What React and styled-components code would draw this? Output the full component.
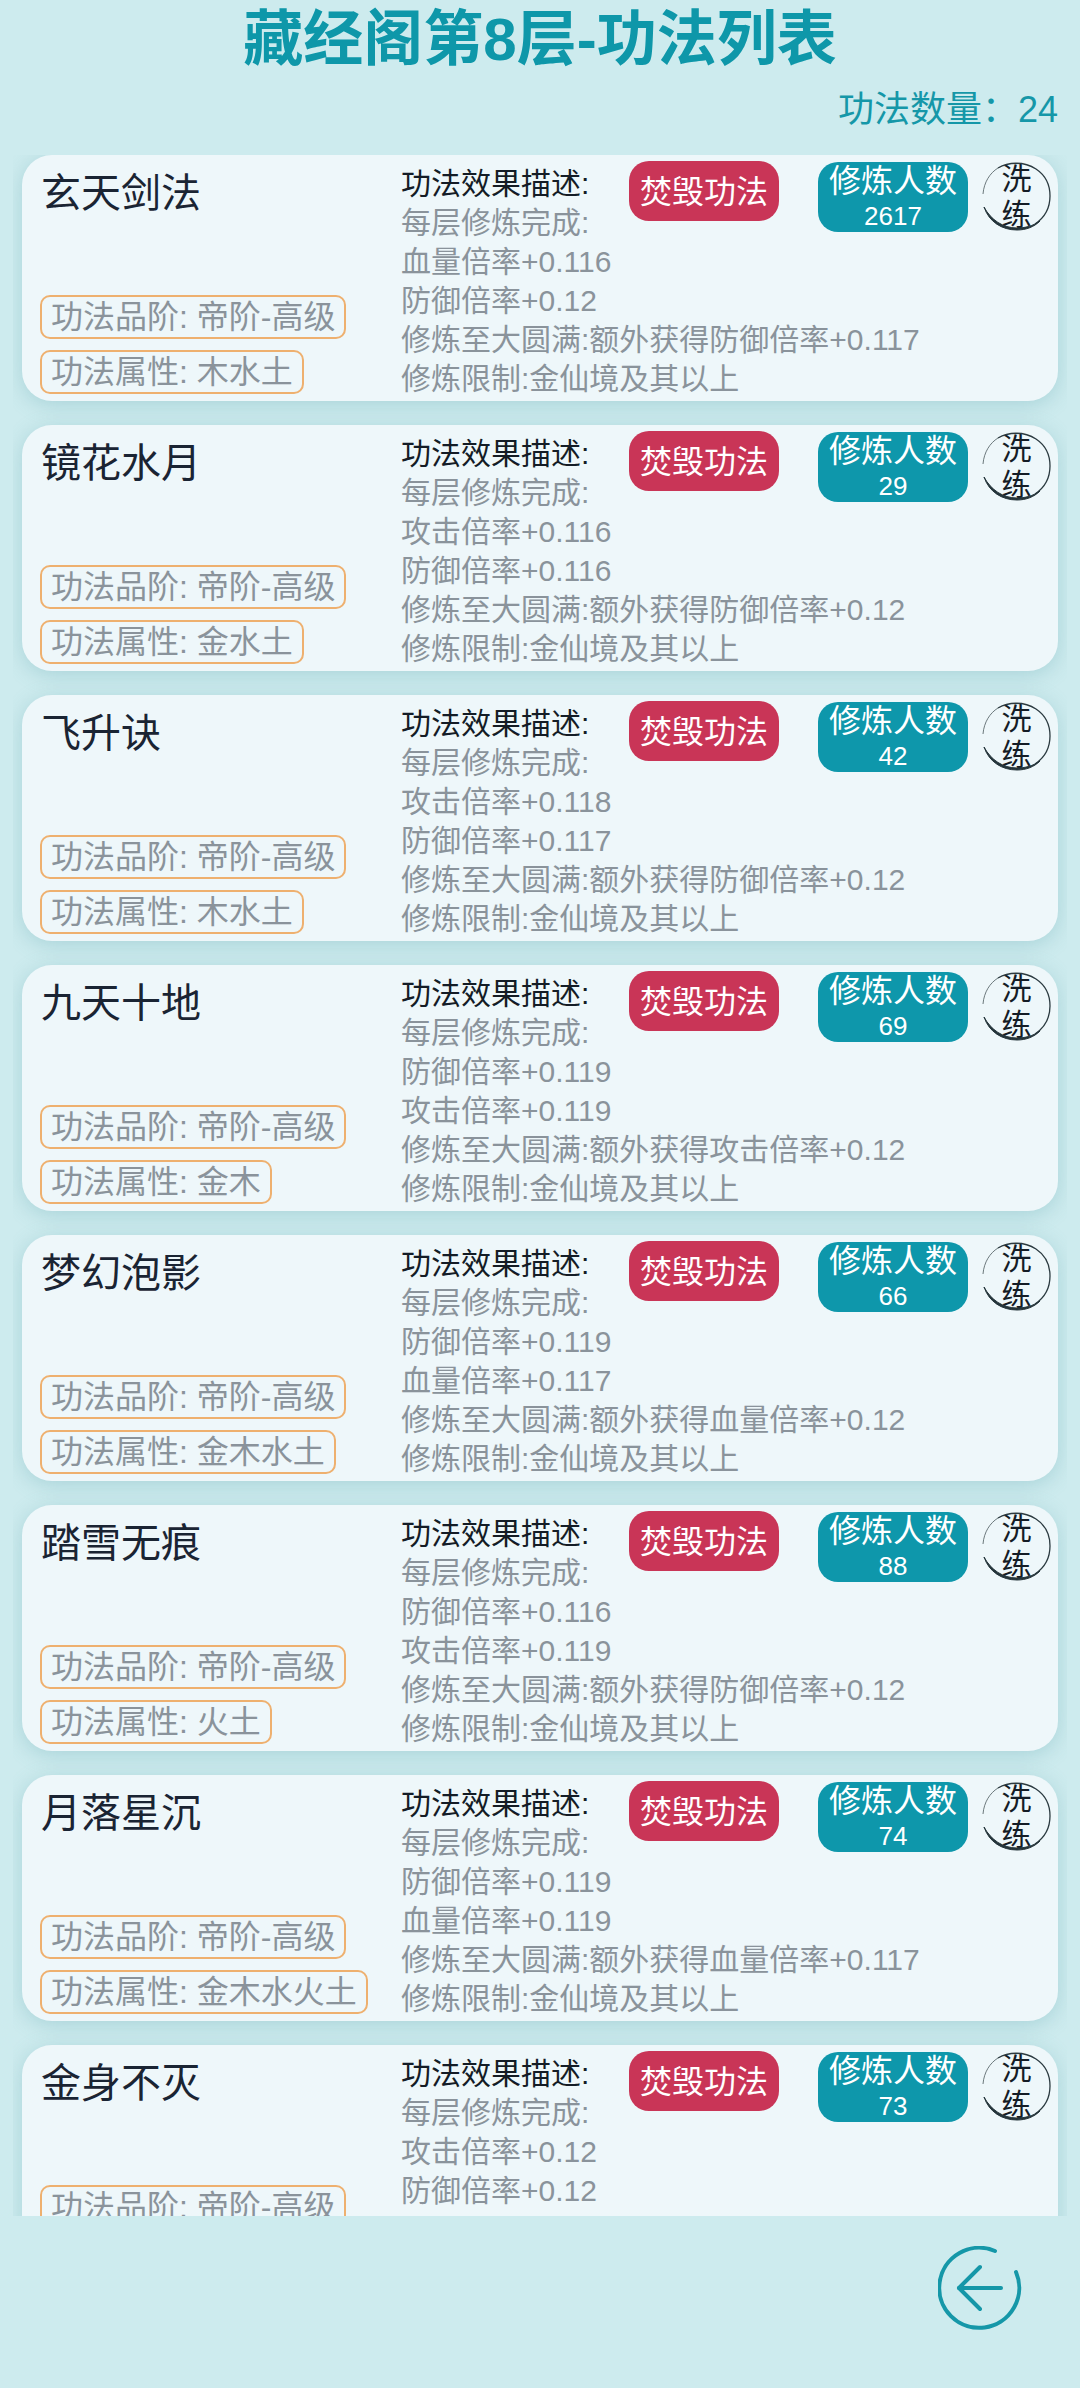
import React from 'react';
import styled, { createGlobalStyle } from 'styled-components';

const skills = [
  { id: 1, name: '玄天剑法', attr: '木水土', people: 2617, lines: ['血量倍率+0.116', '防御倍率+0.12'], bonus: '防御倍率+0.117' },
  { id: 2, name: '镜花水月', attr: '金水土', people: 29, lines: ['攻击倍率+0.116', '防御倍率+0.116'], bonus: '防御倍率+0.12' },
  { id: 3, name: '飞升诀', attr: '木水土', people: 42, lines: ['攻击倍率+0.118', '防御倍率+0.117'], bonus: '防御倍率+0.12' },
  { id: 4, name: '九天十地', attr: '金木', people: 69, lines: ['防御倍率+0.119', '攻击倍率+0.119'], bonus: '攻击倍率+0.12' },
  { id: 5, name: '梦幻泡影', attr: '金木水土', people: 66, lines: ['防御倍率+0.119', '血量倍率+0.117'], bonus: '血量倍率+0.12' },
  { id: 6, name: '踏雪无痕', attr: '火土', people: 88, lines: ['防御倍率+0.116', '攻击倍率+0.119'], bonus: '防御倍率+0.12' },
  { id: 7, name: '月落星沉', attr: '金木水火土', people: 74, lines: ['防御倍率+0.119', '血量倍率+0.119'], bonus: '血量倍率+0.117' },
  // the last card runs past the bottom of the list, its bonus lines never show
  { id: 8, name: '金身不灭', attr: '金木', people: 73, lines: ['攻击倍率+0.12', '防御倍率+0.12'] },
];

const GlobalStyle = createGlobalStyle`
  html, body {
    margin: 0;
    padding: 0;
    background: #cdebee;
    font-family: "Liberation Sans", "Noto Sans CJK SC", sans-serif;
  }
  * {
    box-sizing: border-box;
  }
`;

const Page = styled.div`
  width: 1080px;
  height: 2388px;
  display: flex;
  flex-direction: column;
  overflow: hidden;
  background: #cdebee;
`;

const Title = styled.h1`
  margin: 0;
  height: 79px;
  padding-top: 2px;
  line-height: 76px;
  font-size: 60px;
  font-weight: 700;
  text-align: center;
  color: #0e97a9;
`;

const Count = styled.div`
  height: 76px;
  padding: 11px 22px 0 0;
  line-height: 40px;
  font-size: 36px;
  text-align: right;
  color: #1597a8;
`;

const List = styled.div`
  margin: 0 13px;
  padding: 0 9px;
  height: 2061px;
  overflow: hidden;
  display: flex;
  flex-direction: column;
  gap: 24px;
`;

const Card = styled.article`
  position: relative;
  flex: none;
  height: 246px;
  padding: 8px 7px 7px 18px;
  display: flex;
  background: #eef7fa;
  border-radius: 30px;
  box-shadow: 0 4px 20px rgba(90, 160, 170, 0.3);
`;

const Info = styled.div`
  width: 361px;
  flex: none;
  display: flex;
  flex-direction: column;
  align-items: flex-start;
  gap: 11px;
`;

const Name = styled.div`
  margin-bottom: auto;
  padding: 2px 0 0 1px;
  line-height: 56px;
  font-size: 40px;
  color: #1a2433;
`;

const Tag = styled.div`
  height: 44px;
  padding: 0 9px;
  line-height: 40px;
  font-size: 32px;
  color: #8a939b;
  border: 2px solid #eeb06f;
  border-radius: 10px;
  white-space: nowrap;
`;

const Effect = styled.div`
  padding-top: 1px;
  font-size: 30px;
  line-height: 39px;
  color: #8a939b;
  white-space: nowrap;
`;

const EffectTitle = styled.div`
  color: #141c26;
`;

const Actions = styled.div`
  position: absolute;
  top: 6px;
  right: 7px;
  display: flex;
  align-items: flex-start;
  gap: 14px;
`;

const BurnButton = styled.button`
  width: 150px;
  height: 60px;
  margin-right: 25px;
  padding: 0 0 4px;
  border: 0;
  border-radius: 20px;
  background: #c93557;
  color: #fff;
  font-family: inherit;
  font-size: 32px;
`;

const People = styled.div`
  width: 150px;
  height: 70px;
  margin-top: 1px;
  padding-top: 1px;
  border-radius: 20px;
  background: #0e97ab;
  color: #fff;
  text-align: center;
`;

const PeopleLabel = styled.div`
  font-size: 32px;
  line-height: 36px;
`;

const PeopleValue = styled.div`
  font-size: 26px;
  line-height: 34px;
`;

const Refine = styled.div`
  position: relative;
  width: 69px;
  height: 70px;
  font-size: 30px;
  line-height: 36px;
  text-align: center;
  color: #141c26;
`;

const RefineRing = styled.svg`
  position: absolute;
  left: 0;
  top: 1px;
  width: 69px;
  height: 69px;
`;

const Footer = styled.div`
  flex: 1;
  display: flex;
  align-items: flex-start;
  justify-content: flex-end;
  padding: 30px 58px 0 0;
`;

const BackIcon = styled.svg`
  width: 84px;
  height: 84px;
`;

const Ring = () => (
  <RefineRing viewBox="0 0 69 69" fill="none">
    <path d="M16 6 C26 0 42 -1 54 7 C63 13 68 23 68 34 C68 46 62 56 53 62" stroke="#2b3a40" strokeWidth="1.3" />
    <path d="M16 6 C8 11 2 20 1 32" stroke="#4a585c" strokeWidth="0.8" />
    <path d="M2 45 C7 60 20 68 35 68 C44 68 52 65 58 59 C51 64 43 66 35 66 C21 66 9 58 2 45 Z" fill="#24343a" stroke="#24343a" strokeWidth="1" />
  </RefineRing>
);

const App = () => (
  <Page lang="zh-CN">
    <GlobalStyle />
    <Title>藏经阁第8层-功法列表</Title>
    <Count>功法数量：24</Count>
    <List>
      {skills.map((skill) => (
        <Card key={skill.id}>
          <Info>
            <Name>{skill.name}</Name>
            <Tag>功法品阶: 帝阶-高级</Tag>
            <Tag>功法属性: {skill.attr}</Tag>
          </Info>
          <Effect>
            <EffectTitle>功法效果描述:</EffectTitle>
            <div>每层修炼完成:</div>
            {skill.lines.map((line) => (
              <div key={line}>{line}</div>
            ))}
            {skill.bonus && <div>修炼至大圆满:额外获得{skill.bonus}</div>}
            {skill.bonus && <div>修炼限制:金仙境及其以上</div>}
          </Effect>
          <Actions>
            <BurnButton>焚毁功法</BurnButton>
            <People>
              <PeopleLabel>修炼人数</PeopleLabel>
              <PeopleValue>{skill.people}</PeopleValue>
            </People>
            <Refine>
              <Ring />
              洗<br />练
            </Refine>
          </Actions>
        </Card>
      ))}
    </List>
    <Footer>
      <BackIcon viewBox="0 0 84 84" fill="none" stroke="#1597a8" strokeWidth="4" strokeLinecap="round" strokeLinejoin="round">
        <path d="M57 5 A40 40 0 1 0 78 26" />
        <path d="M42 21 L21 42 L42 63" />
        <path d="M21 42 H63" />
      </BackIcon>
    </Footer>
  </Page>
);

export default App;
